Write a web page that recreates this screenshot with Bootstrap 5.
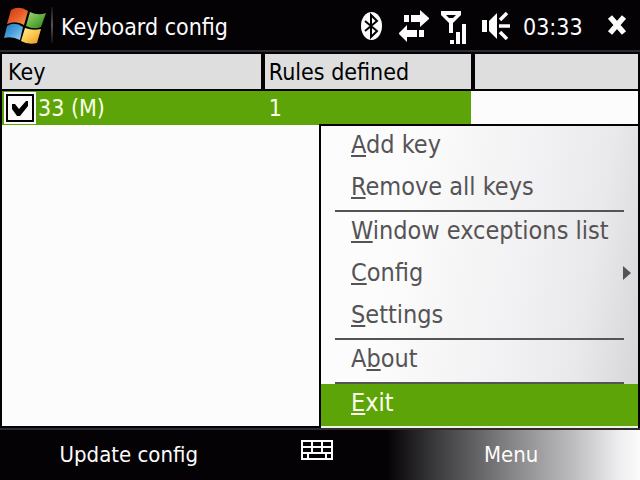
<!DOCTYPE html>
<html lang="en">
<head>
<meta charset="utf-8">
<meta name="viewport" content="width=device-width, initial-scale=1">
<title>Keyboard config</title>
<link href="https://cdn.jsdelivr.net/npm/bootstrap@5.3.0/dist/css/bootstrap.min.css" rel="stylesheet">
<style>
  :root { --ink: #040205; --edge: #2d2b2f; --green: #5ca408; --menu-ink: #555356; }
  body { font-family: "DejaVu Sans Condensed", "DejaVu Sans", sans-serif; font-size: 23px; line-height: 34px; background: var(--ink); color: #fcfcfc; }
  button { border: 0; background: none; color: inherit; padding: 0; }
  svg { display: block; flex: none; }
  .title-bar { height: 52px; border-bottom: 2px solid var(--edge); padding: 0 13px 0 4px; }
  .title-rule { width: 2px; height: 36px; margin: 0 8px 0 4px; background: linear-gradient(#111, #555, #111); }
  .title-text { font-size: 23px; line-height: 34px; padding-top: 3px; }
  .status { gap: 12px; }
  .clock { width: 72px; }
  .work { background: #fcfcfc; border: 2px solid var(--ink); }
  .key-table { table-layout: fixed; border-collapse: separate; border-spacing: 0; color: #000; }
  .key-table th { background: #dededf; font-weight: 400; height: 37px; padding: 1px 4px 0; border-bottom: 2px solid var(--ink); }
  .key-table th + th { border-left: 4px solid var(--ink); }
  .key-table td { height: 34px; padding: 0 8px; }
  .key-table th:first-child { padding-left: 6px; }
  .key-table td:first-child { padding: 0 2px; }
  .picked td:not(:last-child) { background: var(--green); color: #fbffe8; }
  .key-box.form-check-input { width: 28px; height: 28px; margin: 2px; border: 2px solid #000; border-radius: 0; background-color: #fcfcfc; box-shadow: 0 0 0 2px #fcfcfc; }
  .key-box.form-check-input:checked { background-color: #fcfcfc; border-color: #000; background-size: 24px 24px; background-image: url("data:image/svg+xml,%3Csvg xmlns='http://www.w3.org/2000/svg' viewBox='0 0 24 24'%3E%3Cpath d='M4 8h3l4 5 7-8h2v5l-8 10h-3L4 13z' fill='%23000'/%3E%3C/svg%3E"); }
  .key-name { padding-left: 2px; }
  .pop-menu { width: calc(50% + 1px); right: 0; bottom: -2px; border: solid var(--ink); border-width: 2px 0 0 2px; background: linear-gradient(100deg, #fcfcfc 25%, #f1f0f2 62%, #e9e8ea 80%, #d4d3d5 100%); color: var(--menu-ink); font-size: 25px; }
  .pop-menu button { display: flex; width: 100%; height: 42px; padding: 0 7px 4px 30px; line-height: 38px; align-items: center; white-space: nowrap; }
  .pop-menu u { text-decoration-thickness: 2px; text-underline-offset: 2px; text-decoration-skip-ink: none; }
  .pop-menu hr { margin: 0 14px; border-top: 2px solid var(--menu-ink); opacity: 1; }
  .pop-menu .chosen { background: var(--green); color: #fcfff0; }
  .menu-foot { height: 2px; background: #eef3e4; }
  .soft-bar { height: 52px; border-top: 2px solid var(--edge); font-size: 22px; }
  .soft-side { flex: 13 1 0; }
  .soft-mid { flex: 6 1 0; padding: 0 6px 10px 0; }
  .soft-menu { background: linear-gradient(90deg, #040205 2%, #3e3d3f 22%, #858486 50%, #bfbec0 75%, #eeedef 92%, #fcfcfc 100%); }
</style>
<script src="https://cdn.jsdelivr.net/npm/bootstrap@5.3.0/dist/js/bootstrap.bundle.min.js"></script>
</head>
<body class="vh-100 d-flex flex-column overflow-hidden">
<header class="title-bar d-flex align-items-center">
  <button type="button" aria-label="Start">
    <svg width="43" height="38" viewBox="4 6 43 38">
      <defs>
        <linearGradient id="fr" x2="1" y2="1"><stop stop-color="#c83a18"/><stop offset=".5" stop-color="#e85c26"/><stop offset="1" stop-color="#f5a04c"/></linearGradient>
        <linearGradient id="fg" x2="1" y2="1"><stop stop-color="#a8d878"/><stop offset=".6" stop-color="#58a838"/><stop offset="1" stop-color="#2f7c22"/></linearGradient>
        <linearGradient id="fb" x2="1" y2="1"><stop stop-color="#2470b8"/><stop offset=".5" stop-color="#4ba0dc"/><stop offset="1" stop-color="#a0d8f4"/></linearGradient>
        <linearGradient id="fy" x2="1" y2="1"><stop stop-color="#fff09c"/><stop offset=".5" stop-color="#fcc850"/><stop offset="1" stop-color="#e09420"/></linearGradient>
      </defs>
      <path d="M11 10Q19 5 28 11L24 25Q16 20 7 24Z" fill="url(#fr)"/>
      <path d="M30 12Q38 16 46 13L41 27Q34 30 26 26Z" fill="url(#fg)"/>
      <path d="M7 26Q15 21 23 27L20 40Q12 36 4 38Z" fill="url(#fb)"/>
      <path d="M25 28Q33 31 41 29L37 43Q28 45 21 41Z" fill="url(#fy)"/>
    </svg>
  </button>
  <span class="title-rule"></span>
  <h1 class="title-text fw-normal mb-0 me-auto text-nowrap">Keyboard config</h1>
  <div class="status d-flex align-items-center">
    <svg width="26" height="38" viewBox="361 6 26 38" role="img" aria-label="Bluetooth">
      <ellipse cx="371.5" cy="26" rx="10.5" ry="14" fill="#fcfcfc"/>
      <path d="M365 21L377 31L371 37V15L377 21L365 31" fill="none" stroke="#040205" stroke-width="2"/>
    </svg>
    <svg width="30" height="38" viewBox="399 6 30 38" fill="#fcfcfc" role="img" aria-label="Connection">
      <path d="M404 15h5v7h-5zM411 15h9v-5l9 8v1l-9 8v-5h-9zM424 37h-5v-7h5zM417 37h-10v5l-8-8v-1l8-8v5h10z"/>
    </svg>
    <svg width="29" height="38" viewBox="441 6 29 38" fill="#fcfcfc" role="img" aria-label="Signal">
      <path fill-rule="evenodd" d="M441 11h20v4l-8 8v10h-4v-10l-8-8zM446 15l3 3h4l3-3z"/>
      <path d="M450 40h4v4h-4zM456 32h4v12h-4zM462 24h4v20h-4z"/>
    </svg>
    <svg width="29" height="38" viewBox="482 6 29 38" fill="#fcfcfc" role="img" aria-label="Volume">
      <path d="M482 20h5v12h-5zM489 21l8-8v26l-8-8z"/>
      <path d="M500 20l7-7M499 26h11M500 32l7 7" stroke="#fcfcfc" stroke-width="3.5"/>
    </svg>
    <span class="title-text clock">03:33</span>
    <button type="button" aria-label="Close">
      <svg width="20" height="38" viewBox="606 6 20 38"><path d="M609 17l14 16M623 17l-14 16" stroke="#fcfcfc" stroke-width="5.5"/></svg>
    </button>
  </div>
</header>
<main class="work flex-grow-1 position-relative">
  <table class="key-table w-100">
    <colgroup><col style="width:40.7%"><col style="width:33%"><col></colgroup>
    <thead><tr><th scope="col">Key</th><th scope="col">Rules defined</th><th></th></tr></thead>
    <tbody><tr class="picked">
      <td><div class="d-flex align-items-center"><input class="form-check-input key-box" type="checkbox" id="key33" checked><label for="key33" class="key-name">33 (M)</label></div></td>
      <td>1</td><td></td>
    </tr></tbody>
  </table>
  <nav class="pop-menu position-absolute">
    <button type="button"><span><u>A</u>dd key</span></button>
    <button type="button"><span><u>R</u>emove all keys</span></button>
    <hr>
    <button type="button"><span><u>W</u>indow exceptions list</span></button>
    <button type="button"><span class="me-auto"><u>C</u>onfig</span><svg width="8" height="14" viewBox="0 0 8 14"><path d="M0 0L8 7L0 14z" fill="#555356"/></svg></button>
    <button type="button"><span><u>S</u>ettings</span></button>
    <hr>
    <button type="button"><span>A<u>b</u>out</span></button>
    <hr>
    <button type="button" class="chosen"><span><u>E</u>xit</span></button>
    <div class="menu-foot"></div>
  </nav>
</main>
<footer class="soft-bar d-flex">
  <button type="button" class="soft-side">Update config</button>
  <button type="button" class="soft-mid d-flex align-items-center justify-content-center" aria-label="Keyboard">
    <svg width="32" height="20" viewBox="0 0 32 20" fill="none" stroke="#fcfcfc" stroke-width="2"><path d="M1 1h30v18H1zM1 7h30M1 13h30M11 1v12M21 1v12M7 13v6M25 13v6"/></svg>
  </button>
  <button type="button" class="soft-side soft-menu">Menu</button>
</footer>
</body>
</html>
